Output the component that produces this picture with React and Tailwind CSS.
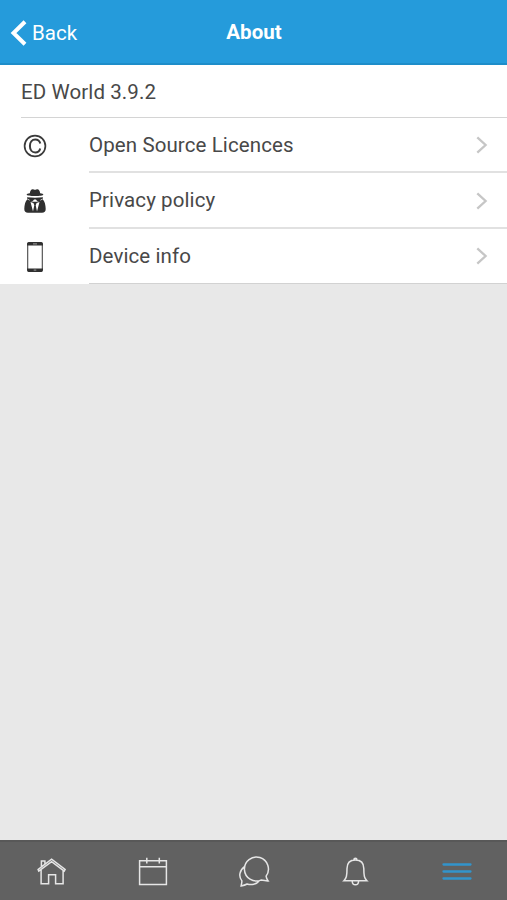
import React from "react";

function Chevron() {
  return (
    <svg className="ml-auto mr-[19px] shrink-0" width="12" height="18" viewBox="0 0 12 18" fill="none" stroke="#c6c6c6" strokeWidth="2.300">
      <path d="M1.3 1.3 9.6 9 1.3 16.7" />
    </svg>
  );
}

function CopyrightIcon() {
  return (
    <svg width="24" height="24" viewBox="0 0 24 24" fill="none" stroke="#3a3a3a">
      <circle cx="12" cy="12" r="10.4" strokeWidth="1.7" />
      <path d="M17.300 9.500C16.600 6.900 14.800 5.500 12.300 5.500c-3.300 0-5.400 2.600-5.400 6.500s2.100 6.500 5.400 6.500c2.500 0 4.300-1.500 4.900-4" strokeWidth="2" />
    </svg>
  );
}

function SpyIcon() {
  return (
    <svg className="mr-px mb-px" width="22" height="24" viewBox="0 0 22 24" fill="#2f2f2f">
      <path d="M5.800 4.200C6.200 1.600 7.300.2 8.500.2c.9 0 1.500.6 2.500.6s1.600-.6 2.500-.6c1.200 0 2.300 1.400 2.700 4 2 .4 3.200.8 3.200 1.300 0 .9-3.700 1.600-8.400 1.600S2.600 6.400 2.600 5.500c0-.5 1.200-.9 3.200-1.300Z" />
      <path d="M3 8.200c5.300.6 10.700.6 16 0l-.5 2h-1.600c-.3 1.700-1 2.200-2.400 2.200-1.200 0-2-.8-2.500-1.900h-2c-.5 1.100-1.300 1.900-2.500 1.900-1.400 0-2.100-.5-2.400-2.200H3.500Z" />
      <path d="M3.400 10.200c2.700 2 5 2.500 7.600 2.500s4.900-.5 7.600-2.500c2.100 1.800 3.100 5.900 3.100 9.800 0 2.500-1.300 3.800-3.700 3.800H4C1.600 23.800.3 22.500.3 20c0-3.900 1-8 3.100-9.800Z" />
      <path d="M6.500 13 9 22.500l1.300-6.300-.9-2.200ZM15.500 13 13 22.500l-1.300-6.300.9-2.200Z" fill="#fff" />
    </svg>
  );
}

function PhoneIcon() {
  return (
    <svg width="18" height="32" viewBox="0 0 18 32">
      <rect x="1.700" y="1.500" width="14.600" height="29" rx="2" fill="#fff" stroke="#484848" strokeWidth="1.100" />
      <path d="M3.300 1h11.400A2.200 2.200 0 0 1 17 3.300v1.200H1V3.300A2.200 2.200 0 0 1 3.300 1ZM1 27.400h16v1.300a2.300 2.300 0 0 1-2.300 2.300H3.300A2.300 2.300 0 0 1 1 28.700Z" fill="#303030" />
      <path d="M7 2.900h4M7.700 29.100h2.600" stroke="#aaa" strokeWidth=".9" />
    </svg>
  );
}

function Row({ icon, label, className, line, text }) {
  return (
    <div className={"flex " + className}>
      <div className="w-[89px] shrink-0 flex items-center pl-[23px] pt-px">
        <div className="w-6 flex justify-center">{icon}</div>
      </div>
      <div className={"flex-1 flex items-center " + line}>
        <span className={text}>{label}</span>
        <Chevron />
      </div>
    </div>
  );
}

function Tab({ children }) {
  return (
    <div className="flex-1 flex items-center justify-center pt-[2px] pl-px">
      <svg width="32" height="32" viewBox="0 0 32 32" fill="none" stroke="#e6e6e6" strokeWidth="1.500">{children}</svg>
    </div>
  );
}

export default function App() {
  return (
    <div className="w-[507px] h-[900px] flex flex-col overflow-hidden bg-[#e8e8e8] text-[#484848] font-[Roboto,sans-serif] text-[20.5px] leading-6 tracking-[0.1px]">
      <header className="h-[65px] shrink-0 grid grid-cols-3 items-center bg-[#259bdb] border-b-2 border-[#1e8dc9] text-white">
        <div className="flex items-center pl-[10px] gap-[5px] tracking-normal pt-[2px]">
          <svg width="17" height="26" viewBox="0 0 17 26" fill="none" stroke="#fff" strokeWidth="4">
            <path d="M15 1.700 3.500 13 15 24.300" />
          </svg>
          <span>Back</span>
        </div>
        <h1 className="text-center font-bold tracking-normal pt-px pl-px">About</h1>
      </header>
      <main className="flex-1">
        <section className="bg-white">
          <div className="h-[53px] pl-[21px] flex">
            <div className="flex-1 flex items-center pt-px border-b border-[#d4d4d4]">ED World 3.9.2</div>
          </div>
          <Row className="h-[55px]" line="pt-px border-b-2 border-[#e1e1e1]" text="" icon={<CopyrightIcon />} label="Open Source Licences" />
          <Row className="h-[56px]" line="pt-px border-b-2 border-[#e1e1e1]" text="pb-[2px]" icon={<SpyIcon />} label="Privacy policy" />
          <Row className="h-[55px]" line="pb-px border-b border-[#d2d2d2]" text="" icon={<PhoneIcon />} label="Device info" />
        </section>
      </main>
      <nav className="h-[60px] shrink-0 flex bg-[#616161] border-t-2 border-[#585858]">
        <Tab>
          <path d="M5.500 13.300V27.500h7.500V18.500h7V27.500h7.500V13.300M3.200 14.800 2.500 13.200 16 2.900 29.500 13.200 28.600 14.800 16 5.300ZM5.800 10.500V4.700H9.300V7.700" transform="translate(.6 .3)" />
        </Tab>
        <Tab>
          <path d="M2.600 4.800H29.400V28.400H2.600ZM2.600 10.700H29.400M9.800 1.800V7.400M22.300 1.800V7.400" />
        </Tab>
        <Tab>
          <path d="M27.600 20.400A12 12 0 1 0 22.500 24.400C24.500 24.800 27 25.300 29.600 25.200 28.300 23.600 27.800 22 27.600 20.400ZM6.500 10.500C1 14.800-.3 20.500 3.400 25.200 3.400 27 3 28.500 2.600 30.200 5 29.900 7 29.300 8.600 28.300 13 29.600 18.100 28.500 20.600 25.300" transform="translate(.5 -.3)" />
        </Tab>
        <Tab>
          <path d="M4.500 24.700C7 22.300 7.600 20 7.600 12.500 7.600 7 10.800 4 16 4s8.400 3 8.400 8.500c0 7.500.6 9.800 3.100 12.200ZM12.800 25.200c.3 4.800 6.100 4.800 6.400 0M14.500 3.700c0-2 3-2 3 0" transform="translate(.4 0)" />
        </Tab>
        <Tab>
          <path d="M2.500 8.500h27M2.500 15.500h27M2.500 22.500h27" stroke="#3294cb" strokeWidth="2.300" strokeLinecap="round" />
        </Tab>
      </nav>
    </div>
  );
}
